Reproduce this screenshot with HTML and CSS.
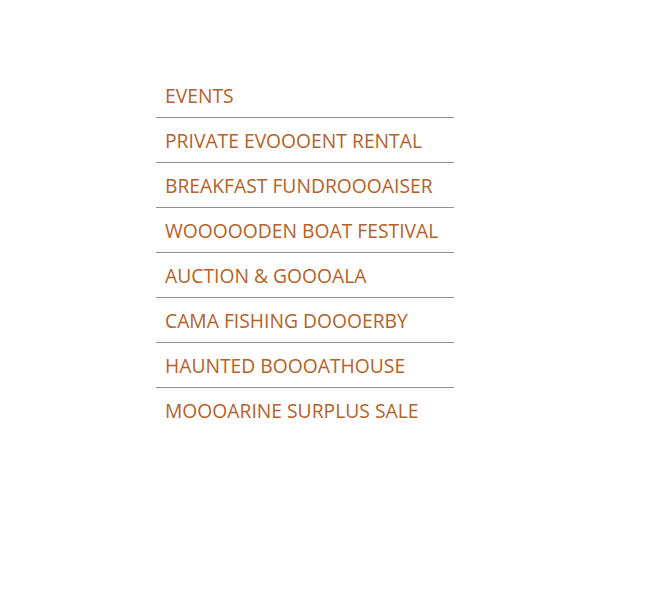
FILE: index.html
```html
<!DOCTYPE html>
<html>
<head>
<meta charset="utf-8">
<link rel="stylesheet" href="styles.css">
</head>
<body>
<ul class="menu">
  <li class="item">EVENTS</li>
  <li class="item">PRIVATE EVOOOENT RENTAL</li>
  <li class="item">BREAKFAST FUNDROOOAISER</li>
  <li class="item">WOOOOODEN BOAT FESTIVAL</li>
  <li class="item">AUCTION &amp; GOOOALA</li>
  <li class="item">CAMA FISHING DOOOERBY</li>
  <li class="item">HAUNTED BOOOATHOUSE</li>
  <li class="item">MOOOARINE SURPLUS SALE</li>
</ul>
</body>
</html>
```
FILE: styles.css
```css
html, body {
  margin: 0;
  padding: 0;
  background: #fff;
}
body {
  font-family: "Open Sans", "Liberation Sans", sans-serif;
}
.menu {
  list-style: none;
  margin: 0;
  padding: 0;
  margin-left: 156px;
  margin-top: 73px;
  width: 298px;
}
.item {
  font-size: 19.3px;
  line-height: 42px;
  padding-top: 2px;
  padding-left: 9px;
  color: #b3622a;
  border-bottom: 1px solid #8f8f8f;
}
.item:last-child {
  border-bottom: none;
}
```
